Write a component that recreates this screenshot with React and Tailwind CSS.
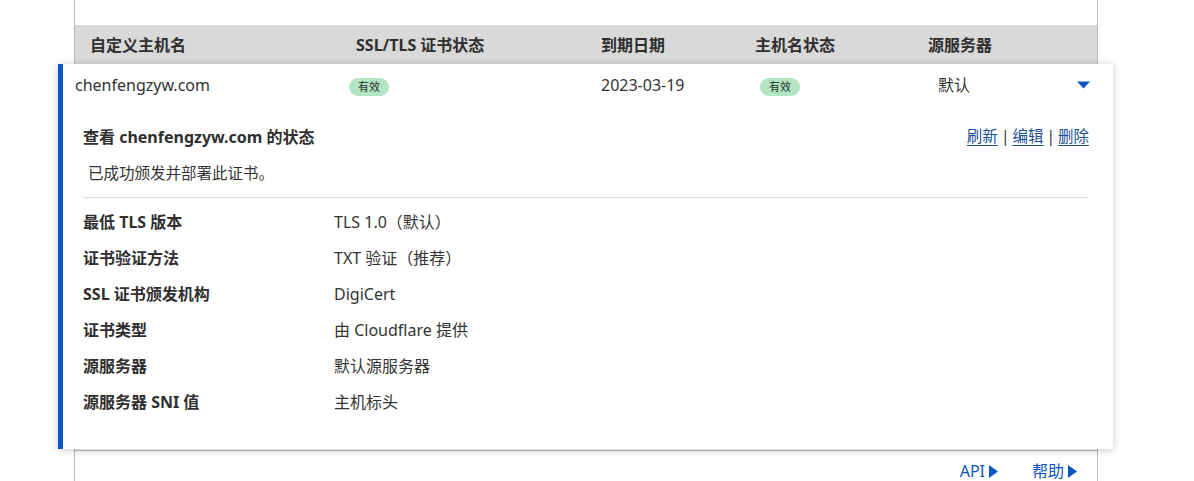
import React from "react";

const font = { fontFamily: '"Noto Sans", "Noto Sans CJK SC", sans-serif' };

const details = [
  ["最低 TLS 版本", "TLS 1.0（默认）"],
  ["证书验证方法", "TXT 验证（推荐）"],
  ["SSL 证书颁发机构", "DigiCert"],
  ["证书类型", "由 Cloudflare 提供"],
  ["源服务器", "默认源服务器"],
  ["源服务器 SNI 值", "主机标头"],
];

function Badge({ children }) {
  return (
    <span className="inline-flex h-[18px] items-center rounded-full bg-[#b3e5c4] px-[9px] text-[11px] text-[#1f3328]">
      {children}
    </span>
  );
}

function Caret() {
  return (
    <svg width="13" height="8" viewBox="0 0 13 8">
      <path d="M0 0.5 L13 0.5 L6.5 7.5 Z" fill="#0b55c4" />
    </svg>
  );
}

function Play() {
  return (
    <svg width="9" height="13" viewBox="0 0 9 13" className="ml-[4px]">
      <path d="M0 0 L9 6.5 L0 13 Z" fill="#0b55c4" />
    </svg>
  );
}

export default function App() {
  return (
    <div className="h-[481px] w-[1194px] overflow-hidden bg-white text-[#333]" style={font}>
      <div className="ml-[74px] w-[1024px] border-x border-[#b8b8b8]">
        <div className="h-[25px]" />

        {/* table header */}
        <div className="grid h-[39px] grid-cols-[266px_245px_154px_173px_1fr] items-center bg-[#d9d9d9] pl-[15px] text-[16px] font-bold text-[#2f2f2f]">
          <div>自定义主机名</div>
          <div>SSL/TLS 证书状态</div>
          <div>到期日期</div>
          <div>主机名状态</div>
          <div>源服务器</div>
        </div>

        {/* expanded row */}
        <div className="relative z-10 -ml-[17px] -mr-[16px] border-l-[5px] border-[#0b55c4] bg-white shadow-[0_1px_8px_rgba(0,0,0,0.22)]">
          <div className="grid h-[42px] grid-cols-[274px_252px_159px_178px_1fr] items-center pl-[12px] pr-[23px] text-[16px]">
            <div>chenfengzyw.com</div>
            <div><Badge>有效</Badge></div>
            <div>2023-03-19</div>
            <div><Badge>有效</Badge></div>
            <div className="flex items-center justify-between">
              <span>默认</span>
              <Caret />
            </div>
          </div>

          <div className="pl-[20px] pr-[24px] pb-[29px] pt-[20px]">
            <div className="flex h-[22px] items-center justify-between">
              <div className="text-[16px] font-bold text-[#2f2f2f]">查看 chenfengzyw.com 的状态</div>
              <div className="text-[15.5px] text-[#1d4f91]">
                <a className="underline underline-offset-[3px]">刷新</a>
                <span className="mx-[3px] text-[#333]">|</span>
                <a className="underline underline-offset-[3px]">编辑</a>
                <span className="mx-[3px] text-[#333]">|</span>
                <a className="underline underline-offset-[3px]">删除</a>
              </div>
            </div>
            <div className="mt-[15px] h-[20px] pl-[5px] text-[15.5px] leading-[20px]">已成功颁发并部署此证书。</div>
            <div className="mt-[14px] border-t border-[#dcdcdc]" />
            <div className="mt-[6px]">
              {details.map(([k, v]) => (
                <div key={k} className="grid h-[36px] grid-cols-[251px_1fr] items-center text-[16px]">
                  <div className="font-bold text-[#2f2f2f]">{k}</div>
                  <div>{v}</div>
                </div>
              ))}
            </div>
          </div>
        </div>

        {/* footer */}
        <div className="mt-[1px] flex h-[60px] items-start justify-end gap-[34px] border-t border-[#b8b8b8] pr-[20px] pt-[8px] text-[16px] text-[#0b55c4]">
          <a className="flex items-center">API<Play /></a>
          <a className="flex items-center">帮助<Play /></a>
        </div>
      </div>
    </div>
  );
}
